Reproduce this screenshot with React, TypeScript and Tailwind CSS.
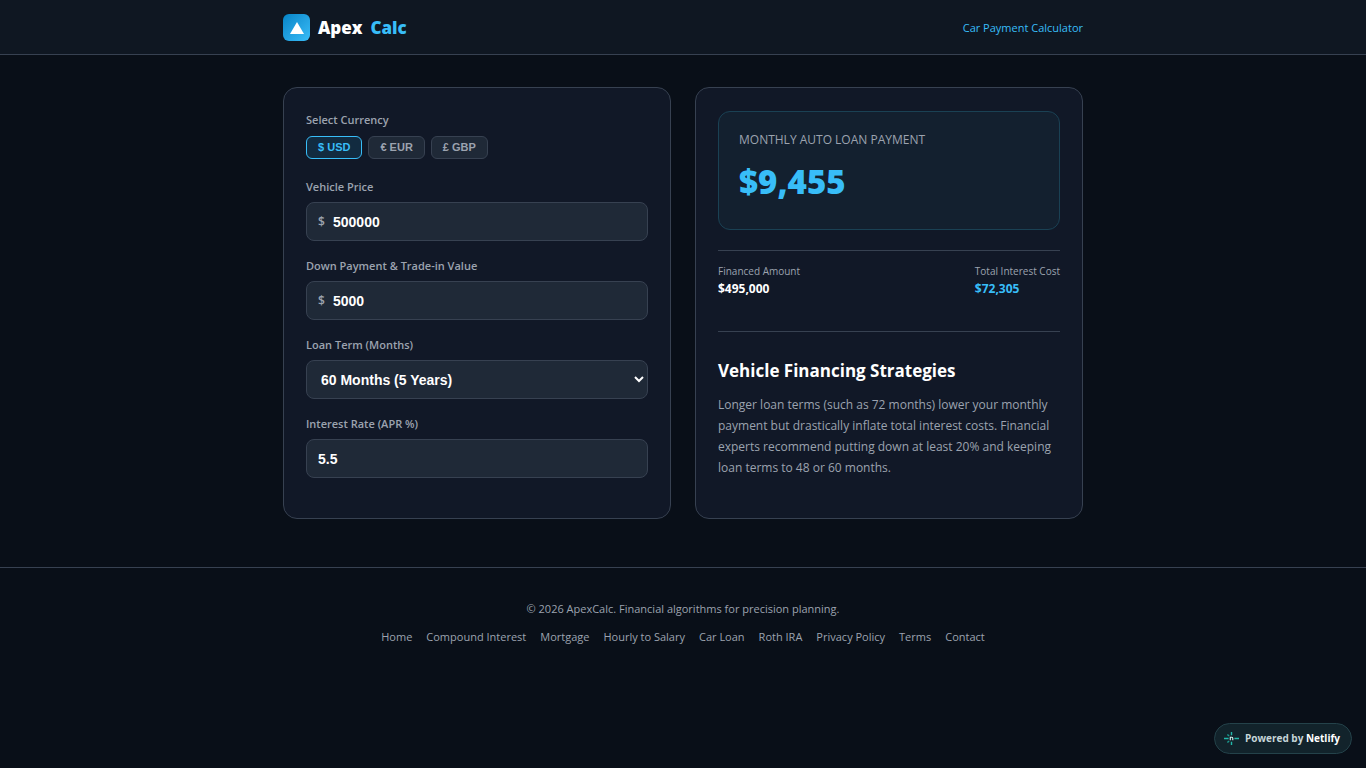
import { useState } from 'react';
import type { ReactNode } from 'react';

type Currency = 'USD' | 'EUR' | 'GBP';

const SYMBOLS: Record<Currency, string> = { USD: '$', EUR: '€', GBP: '£' };

const TERMS = [
  { value: 36, label: '36 Months (3 Years)' },
  { value: 48, label: '48 Months (4 Years)' },
  { value: 60, label: '60 Months (5 Years)' },
  { value: 72, label: '72 Months (6 Years)' },
];

const FOOTER_LINKS = [
  'Home',
  'Compound Interest',
  'Mortgage',
  'Hourly to Salary',
  'Car Loan',
  'Roth IRA',
  'Privacy Policy',
  'Terms',
  'Contact',
];

const FIELD_CLASS =
  "h-[39px] w-full rounded-lg border border-[#374151] bg-[#1f2937] font-['Liberation_Sans',sans-serif] text-sm font-bold text-white outline-none focus:border-[#38bdf8]";

function calcLoan(price: number, down: number, months: number, apr: number) {
  const principal = Math.max(price - down, 0);
  const rate = apr / 100 / 12;
  const monthly =
    rate === 0 ? principal / months : (principal * rate) / (1 - Math.pow(1 + rate, -months));
  return { principal, monthly, interest: monthly * months - principal };
}

function Field({ id, label, children }: { id: string; label: string; children: ReactNode }) {
  return (
    <div className="mb-[15px]">
      <label htmlFor={id} className="mb-[5px] block text-[11px] leading-5 font-semibold text-[#9ca3af]">
        {label}
      </label>
      {children}
    </div>
  );
}

function MoneyInput({
  id,
  symbol,
  value,
  onChange,
}: {
  id: string;
  symbol: string;
  value: string;
  onChange: (value: string) => void;
}) {
  return (
    <div className="relative">
      <span className="absolute inset-y-0 left-3 flex items-center text-[12px] font-semibold text-[#9ca3af]">
        {symbol}
      </span>
      <input
        id={id}
        inputMode="decimal"
        value={value}
        onChange={(e) => onChange(e.target.value)}
        className={`${FIELD_CLASS} pr-3 pl-[26px]`}
      />
    </div>
  );
}

function NetlifyMark() {
  return (
    <svg width="15" height="13" viewBox="0 0 15 13" fill="none" aria-hidden="true">
      <path d="M0 6.5h4.6M10.4 6.5H15" stroke="#22b8aa" strokeWidth="1.4" />
      <path d="M7.5 0v3.2M7.5 9.8V13" stroke="#22b8aa" strokeWidth="1.4" />
      <path d="M3.4 2.4l1.7 1.7M3.4 10.6l1.7-1.7" stroke="#1a9a8f" strokeWidth="1.4" />
      <path d="M6.3 8.2V5.2h1.6c.6 0 .9.4.9 1v2" stroke="#d5f5f2" strokeWidth="1.1" />
    </svg>
  );
}

export default function App() {
  const [currency, setCurrency] = useState<Currency>('USD');
  const [price, setPrice] = useState('500000');
  const [down, setDown] = useState('5000');
  const [months, setMonths] = useState(60);
  const [apr, setApr] = useState('5.5');

  const symbol = SYMBOLS[currency];
  const loan = calcLoan(Number(price) || 0, Number(down) || 0, months, Number(apr) || 0);
  const money = (n: number) => symbol + Math.round(n).toLocaleString('en-US');

  return (
    <div className="min-h-screen bg-[#090f18] font-['Open_Sans','Noto_Sans',sans-serif] text-white">
      <header className="border-b border-[#374151] bg-[#0f1722]">
        <div className="mx-auto flex h-[54px] max-w-[800px] items-center justify-between">
          <a href="#" className="flex items-center gap-2 text-[17px] leading-7 font-extrabold">
            <span className="flex size-[27px] items-center justify-center rounded-md bg-linear-to-br from-[#0284c7] to-[#38bdf8]">
              <svg width="14" height="13" viewBox="0 0 14 13" aria-hidden="true">
                <path d="M7 1l7 12H0z" fill="#fff" />
              </svg>
            </span>
            <span className="pt-0.5">Apex</span>
            <span className="pt-0.5 text-[#38bdf8]">Calc</span>
          </a>
          <a href="#" className="pt-0.5 text-[11px] font-medium text-[#38bdf8]">
            Car Payment Calculator
          </a>
        </div>
      </header>

      <main className="mx-auto grid max-w-[800px] gap-6 pt-8 pb-12 md:grid-cols-2">
        <section className="rounded-[14px] border border-[#374151] bg-[#111827] px-[22px] pt-[22px] pb-6">
          <div className="mb-[18px]">
            <p id="currency-label" className="mb-1.5 text-[11px] leading-5 font-semibold text-[#9ca3af]">
              Select Currency
            </p>
            <div role="group" aria-labelledby="currency-label" className="flex gap-1.5">
              {(Object.keys(SYMBOLS) as Currency[]).map((code) => (
                <button
                  key={code}
                  type="button"
                  aria-pressed={currency === code}
                  onClick={() => setCurrency(code)}
                  className={`h-[23px] rounded-md border px-[11px] font-['Liberation_Sans',sans-serif] text-[11px] font-bold ${
                    currency === code
                      ? 'border-[#38bdf8] bg-[#122b40] text-[#38bdf8]'
                      : 'border-[#374151] bg-[#1f2937] text-[#9ca3af]'
                  }`}
                >
                  {SYMBOLS[code]} {code}
                </button>
              ))}
            </div>
          </div>

          <Field id="price" label="Vehicle Price">
            <MoneyInput id="price" symbol={symbol} value={price} onChange={setPrice} />
          </Field>

          <Field id="down" label="Down Payment & Trade-in Value">
            <MoneyInput id="down" symbol={symbol} value={down} onChange={setDown} />
          </Field>

          <Field id="term" label="Loan Term (Months)">
            <select
              id="term"
              value={months}
              onChange={(e) => setMonths(Number(e.target.value))}
              className={`${FIELD_CLASS} pl-2.5`}
            >
              {TERMS.map((t) => (
                <option key={t.value} value={t.value}>
                  {t.label}
                </option>
              ))}
            </select>
          </Field>

          <Field id="apr" label="Interest Rate (APR %)">
            <input
              id="apr"
              inputMode="decimal"
              value={apr}
              onChange={(e) => setApr(e.target.value)}
              className={`${FIELD_CLASS} px-[11px]`}
            />
          </Field>
        </section>

        <section className="rounded-[14px] border border-[#374151] bg-[#111827] px-[22px] pt-[23px] pb-10">
          <div className="mb-5 h-[119px] rounded-xl border border-[#1a4154] bg-[#13202f] px-5 pt-[18px]">
            <p className="text-[12px] leading-5 text-[#9ca3af] uppercase">Monthly Auto Loan Payment</p>
            <p className="mt-2 text-[33px] leading-12 font-extrabold text-[#38bdf8]">{money(loan.monthly)}</p>
          </div>

          <dl className="flex justify-between border-t border-[#374151] pt-[11px] pb-[33px]">
            <div>
              <dt className="text-[10px] leading-[18px] text-[#9ca3af]">Financed Amount</dt>
              <dd className="text-[12px] leading-[18px] font-bold">{money(loan.principal)}</dd>
            </div>
            <div>
              <dt className="text-[10px] leading-[18px] text-[#9ca3af]">Total Interest Cost</dt>
              <dd className="text-[12px] leading-[18px] font-bold text-[#38bdf8]">{money(loan.interest)}</dd>
            </div>
          </dl>

          <article className="border-t border-[#374151] pt-[25px]">
            <h2 className="mb-[9px] text-[17px] leading-7 font-bold">Vehicle Financing Strategies</h2>
            <p className="text-[12px] leading-[21px] text-[#9ca3af]">
              Longer loan terms (such as 72 months) lower your monthly payment but drastically inflate total
              interest costs. Financial experts recommend putting down at least 20% and keeping loan terms to
              48 or 60 months.
            </p>
          </article>
        </section>
      </main>

      <footer className="border-t border-[#374151] pt-8 text-center text-[11px] leading-[18px] text-[#9ca3af]">
        <p>© 2026 ApexCalc. Financial algorithms for precision planning.</p>
        <nav className="mt-2.5 flex flex-wrap justify-center gap-x-3.5">
          {FOOTER_LINKS.map((name) => (
            <a key={name} href="#">
              {name}
            </a>
          ))}
        </nav>
      </footer>

      <a
        href="#"
        className="fixed right-3.5 bottom-3.5 flex h-[31px] items-center gap-1.5 rounded-full border border-[#24424a] bg-[#12232b] pr-[11px] pl-[9px] text-[10px] font-bold text-[#c5d5d8]"
      >
        <NetlifyMark />
        <span>
          Powered by <strong className="font-bold text-white">Netlify</strong>
        </span>
      </a>
    </div>
  );
}
